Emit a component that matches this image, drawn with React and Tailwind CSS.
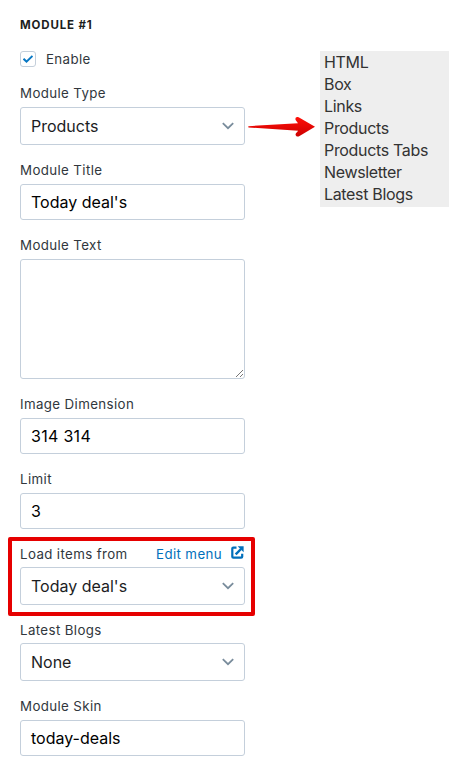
import React from "react";

function Chevron() {
  return (
    <svg className="shrink-0" width="12" height="8" viewBox="0 0 12 8" fill="none">
      <path d="M0.8 1.2 L6 6.2 L11.2 1.2" stroke="#798c9c" strokeWidth="1.8" />
    </svg>
  );
}

function Label({ children }) {
  return <div className="h-5 text-[13.3px] leading-5 tracking-[0.38px] whitespace-nowrap text-[#31373d]">{children}</div>;
}

function SelectBox({ value }) {
  return (
    <div className="mt-[3px] flex h-[38px] items-center justify-between rounded-[3px] border border-[#c4cfdb] px-2.5 text-base">
      <span className="whitespace-nowrap text-[#1c1d1f]">{value}</span>
      <Chevron />
    </div>
  );
}

function InputBox({ value, tracking = "tracking-[0px]" }) {
  return (
    <div className="mt-1 flex h-9 items-center rounded-[3px] border border-[#c4cfdb] px-2.5 text-base text-black">
      <span className={`whitespace-nowrap ${tracking}`}>{value}</span>
    </div>
  );
}

const moduleTypes = ["HTML", "Box", "Links", "Products", "Products Tabs", "Newsletter", "Latest Blogs"];

export default function App() {
  return (
    <div className="relative flex h-[773px] w-[449px] items-start overflow-hidden bg-white font-['Inter',sans-serif]">
      <div className="ml-5 flex w-[225px] flex-col pt-[15px]">
        <h1 className="h-5 text-[11.5px] leading-5 font-bold tracking-[0.85px] whitespace-nowrap text-[#1c1e20]">MODULE #1</h1>
        <div className="mt-3.5 flex h-5 items-center gap-2.5">
          <div className="flex size-4 items-center justify-center rounded-[3px] border border-[#c4cfdb]">
            <svg width="10" height="8" viewBox="0 0 10 8" fill="none">
              <path d="M0.5 3.8 L3.5 6.6 L9.5 0.9" stroke="#0878c4" strokeWidth="2" />
            </svg>
          </div>
          <Label>Enable</Label>
        </div>
        <div className="mt-3.5 flex flex-col gap-[15px]">
          <div>
            <Label>Module Type</Label>
            <div className="pt-px">
              <SelectBox value="Products" />
            </div>
          </div>
          <div>
            <Label>Module Title</Label>
            <InputBox value="Today deal's" />
          </div>
          <div>
            <Label>Module Text</Label>
            <div className="mt-1 flex h-[120px] items-end justify-end rounded-[3px] border border-[#c4cfdb] p-px">
              <svg width="8" height="8" viewBox="0 0 8 8" shapeRendering="crispEdges">
                <path d="M0.5 7.5 L7.5 0.5 M4.5 7.5 L7.5 4.5" stroke="#555" strokeWidth="0.8" />
              </svg>
            </div>
          </div>
          <div>
            <Label>Image Dimension</Label>
            <InputBox value="314 314" tracking="tracking-[0.3px]" />
          </div>
          <div>
            <Label>Limit</Label>
            <InputBox value="3" />
          </div>
          <div>
            <div className="flex justify-between">
              <Label>Load items from</Label>
              <div className="flex h-5 items-center gap-[9px] pr-px text-[13.3px] leading-5 tracking-[0.38px] text-[#006fbb]">
                <span className="whitespace-nowrap">Edit menu</span>
                <svg className="mb-[3px]" width="13" height="13" viewBox="0 0 13 13" fill="none" stroke="#006fbb" strokeWidth="2.2">
                  <path d="M5.5 1.6 H2.3 Q1.3 1.6 1.3 2.6 V10.7 Q1.3 11.7 2.3 11.7 H10.2 Q11.2 11.7 11.2 10.7 V7.8" />
                  <path d="M4.7 8.3 L10 3" strokeWidth="2.4" />
                  <path d="M6.6 0.3 H12.6 V6.3 Z" fill="#006fbb" stroke="none" />
                </svg>
              </div>
            </div>
            <SelectBox value="Today deal's" />
          </div>
          <div>
            <Label>Latest Blogs</Label>
            <SelectBox value="None" />
          </div>
          <div>
            <Label>Module Skin</Label>
            <InputBox value="today-deals" />
          </div>
        </div>
      </div>
      <svg className="mt-[116px] ml-[3px] shrink-0" width="68" height="22" viewBox="0 0 68 22">
        <defs>
          <linearGradient id="arrow" x1="0" y1="0" x2="0" y2="1">
            <stop offset="0" stopColor="#ff1008" />
            <stop offset="1" stopColor="#cc0000" />
          </linearGradient>
        </defs>
        <path d="M0.5 10.2 L50 7.2 L47.6 4 Q46.8 1.2 49.2 1 Q50.5 0.8 51.5 1.8 L67 10.7 L51.5 20 Q49.5 21.3 48 19.7 Q47 18.5 48.2 17 L50.2 14.7 L0.5 11.5 Q0 10.8 0.5 10.2 Z" fill="url(#arrow)" />
      </svg>
      <ul className="mt-[51px] ml-1 h-[156px] w-[129px] shrink-0 bg-[#eeeeee] pl-1 text-base leading-[22px] tracking-[-0.33px] whitespace-nowrap text-[#333333]">
        {moduleTypes.map((type) => (
          <li key={type}>{type}</li>
        ))}
      </ul>
      <div className="pointer-events-none absolute top-[537px] left-2 h-[79px] w-[247px] rounded-[2px] border-4 border-[#e60000]" />
    </div>
  );
}
